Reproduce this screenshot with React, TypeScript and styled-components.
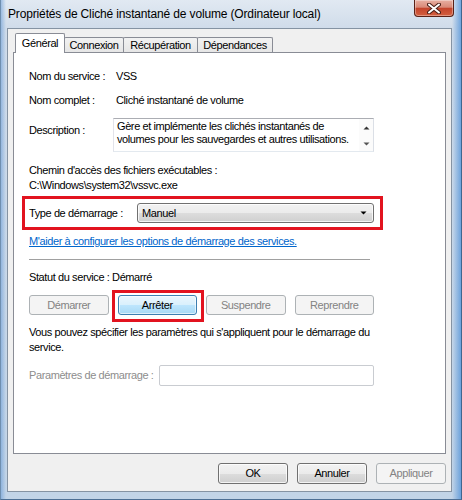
import React from 'react';
import styled, { createGlobalStyle, css } from 'styled-components';

const Global = createGlobalStyle`
  html, body { margin: 0; padding: 0; background: #ffffff; }
  body { font-family: "Liberation Sans", Arial, sans-serif; font-size: 11px; color: #000; }
  * { box-sizing: border-box; }
`;

const UI_FONT = css`
  font-family: "Liberation Sans", Arial, sans-serif;
  font-size: 11px;
  letter-spacing: -0.4px;
  line-height: 13px;
`;

const Win = styled.div`
  width: 462px;
  height: 500px;
  display: flex;
  flex-direction: column;
  background:
    linear-gradient(90deg, rgba(80, 140, 210, 0.45) 0px, rgba(255, 255, 255, 0) 5px, rgba(255, 255, 255, 0) calc(100% - 9px), rgba(70, 140, 215, 0.7) 100%),
    linear-gradient(180deg, #e1e9f2 0px, #d0dcea 28px, #c2d4e7 100%);
  border-left: 1px solid #6f8fb0;
  border-right: 1px solid #3f6790;
  border-bottom: 1px solid #4d6f94;
  overflow: hidden;
`;

const TitleBar = styled.div`
  height: 28px;
  flex: none;
  display: flex;
  align-items: flex-start;
  padding: 0 7px;
`;

const Title = styled.div`
  align-self: center;
  font-family: "Liberation Sans", Arial, sans-serif;
  font-size: 12px;
  letter-spacing: -0.15px;
  color: #000;
`;

const CloseBtn = styled.div`
  margin-left: auto;
  width: 40px;
  height: 17px;
  border: 1px solid #5a2117;
  border-top: none;
  border-radius: 0 0 4px 4px;
  background: linear-gradient(180deg, #e8b0a2 0%, #d98a78 45%, #c4452c 52%, #d4603f 100%);
  box-shadow: inset 0 0 0 1px rgba(255, 255, 255, 0.35);
  display: flex;
  align-items: center;
  justify-content: center;
`;

const Client = styled.div`
  flex: 1;
  margin: 0 9px 7px 6px;
  background: #f0f0f0;
  border: 1px solid #8593a3;
  padding: 4px 5px 7px 5px;
  display: flex;
  flex-direction: column;
`;

const TabStrip = styled.div`
  display: flex;
  align-items: flex-end;
  height: 20px;
  padding-left: 2px;
  position: relative;
  z-index: 1;
`;

const Tab = styled.div<{ $active?: boolean; $w: number }>`
  ${UI_FONT};
  width: ${(p) => p.$w}px;
  height: ${(p) => (p.$active ? 20 : 15)}px;
  margin-bottom: ${(p) => (p.$active ? 0 : 1)}px;
  margin-right: -1px;
  border: 1px solid #898c95;
  border-bottom: none;
  border-radius: 2px 2px 0 0;
  background: ${(p) => (p.$active ? '#ffffff' : 'linear-gradient(180deg, #f2f2f2 0%, #e6e6e6 100%)')};
  display: flex;
  align-items: center;
  justify-content: center;
  padding-bottom: ${(p) => (p.$active ? 1 : 0)}px;
`;

const Panel = styled.div`
  flex: 1;
  margin-top: -1px;
  background: #ffffff;
  border: 1px solid #898c95;
  padding: 0 0 0 15px;
  display: flex;
  flex-direction: column;
  align-items: flex-start;
`;

const Text = styled.div<{ $mt?: number; $muted?: boolean }>`
  ${UI_FONT};
  margin-top: ${(p) => p.$mt ?? 0}px;
  color: ${(p) => (p.$muted ? '#8d8d8d' : '#000')};
  white-space: nowrap;
`;

const InfoRow = styled.div<{ $mt: number }>`
  display: grid;
  grid-template-columns: 87px auto;
  align-items: start;
  margin-top: ${(p) => p.$mt}px;
`;

const DescLabel = styled(Text)`
  margin-top: 6px;
`;

const DescBox = styled.div`
  margin-left: -3px;
  width: 261px;
  height: 34px;
  border: 1px solid #abadb3;
  border-right-color: #dbdfe6;
  border-bottom-color: #e3e9ef;
  border-left-color: #e2e3ea;
  background: #fff;
  display: flex;
`;

const DescText = styled.div`
  ${UI_FONT};
  flex: 1;
  padding: 1px 0 0 3px;
  white-space: nowrap;
`;

const ScrollBar = styled.div`
  width: 14px;
  background: #fbfbfb;
  display: flex;
  flex-direction: column;
  justify-content: space-between;
  align-items: center;
  padding: 7px 0 5px;
`;

const HighlightWrap = styled.div<{ $mt?: number }>`
  position: relative;
  margin-top: ${(p) => p.$mt ?? 0}px;
`;

const RedFrame = styled.div<{ $t: number; $r: number; $b: number; $l: number }>`
  position: absolute;
  top: ${(p) => -p.$t}px;
  right: ${(p) => -p.$r}px;
  bottom: ${(p) => -p.$b}px;
  left: ${(p) => -p.$l}px;
  border: 3px solid #e2131f;
  pointer-events: none;
`;

const FieldRow = styled.div<{ $label: number; $mt?: number }>`
  display: grid;
  grid-template-columns: ${(p) => p.$label}px auto;
  align-items: center;
  margin-top: ${(p) => p.$mt ?? 0}px;
`;

const Combo = styled.div`
  ${UI_FONT};
  width: 237px;
  height: 20px;
  border: 1px solid #707070;
  border-radius: 3px;
  background: linear-gradient(180deg, #f2f2f2 0%, #ebebeb 50%, #dddddd 50%, #cfcfcf 100%);
  box-shadow: inset 0 0 0 1px rgba(255, 255, 255, 0.75);
  display: flex;
  align-items: center;
  padding: 0 6px 0 4px;
  justify-content: space-between;
`;

const Link = styled.a`
  ${UI_FONT};
  display: block;
  margin-top: 12px;
  color: #0066cc;
  text-decoration: underline;
  white-space: nowrap;
`;

const Separator = styled.div`
  margin-top: 11px;
  width: 341px;
  height: 1px;
  background: #a0a0a0;
`;

const ServiceButtons = styled.div`
  display: grid;
  grid-template-columns: repeat(4, 1fr);
  column-gap: 9px;
  width: 345px;
  margin-top: 11px;
`;

type BtnState = 'normal' | 'disabled' | 'hot';

const PushButton = styled.div<{ $state?: BtnState; $h?: number; $w?: number }>`
  ${UI_FONT};
  height: ${(p) => p.$h ?? 20}px;
  width: ${(p) => (p.$w ? `${p.$w}px` : 'auto')};
  border-radius: 3px;
  display: flex;
  align-items: center;
  justify-content: center;
  ${(p) =>
    p.$state === 'disabled'
      ? css`
          border: 1px solid #adb2b5;
          background: #f4f4f4;
          color: #838383;
        `
      : p.$state === 'hot'
      ? css`
          border: 1px solid #3c7fb1;
          background: linear-gradient(180deg, #eaf6fd 0%, #d9f0fc 50%, #bee6fd 50%, #a7d9f5 100%);
          box-shadow: inset 0 0 0 1px rgba(255, 255, 255, 0.6);
          color: #000;
        `
      : css`
          border: 1px solid #707070;
          background: linear-gradient(180deg, #f2f2f2 0%, #ebebeb 50%, #dddddd 50%, #cfcfcf 100%);
          box-shadow: inset 0 0 0 1px rgba(255, 255, 255, 0.75);
          color: #000;
        `}
`;

const Paragraph = styled.div`
  ${UI_FONT};
  line-height: 15px;
  margin-top: 10px;
  white-space: nowrap;
`;

const TextInput = styled.div`
  width: 215px;
  height: 21px;
  border: 1px solid #c9ccd1;
  border-radius: 2px;
  background: #fff;
`;

const Footer = styled.div`
  display: flex;
  justify-content: flex-end;
  gap: 9px;
  margin-top: 9px;
`;

const UpArrow = () => (
  <svg width="7" height="4" viewBox="0 0 7 4">
    <path d="M0.5 3.5 L3.5 0.5 L6.5 3.5 Z" fill="#333" />
  </svg>
);
const DownArrow = ({ color = '#333' }: { color?: string }) => (
  <svg width="7" height="4" viewBox="0 0 7 4">
    <path d="M0.5 0.5 L6.5 0.5 L3.5 3.5 Z" fill={color} />
  </svg>
);

export default function App() {
  return (
    <>
      <Global />
      <Win>
        <TitleBar>
          <Title>Propriétés de Cliché instantané de volume (Ordinateur local)</Title>
          <CloseBtn>
            <svg width="14" height="11" viewBox="0 0 14 11">
              <path d="M2 1.5 L12 9.5 M12 1.5 L2 9.5" stroke="#4a2018" strokeWidth="4" strokeLinecap="round" />
              <path d="M2 1.5 L12 9.5 M12 1.5 L2 9.5" stroke="#ffffff" strokeWidth="2" strokeLinecap="round" />
            </svg>
          </CloseBtn>
        </TitleBar>
        <Client>
          <TabStrip>
            <Tab $active $w={50}>Général</Tab>
            <Tab $w={60}>Connexion</Tab>
            <Tab $w={75}>Récupération</Tab>
            <Tab $w={76}>Dépendances</Tab>
          </TabStrip>
          <Panel>
            <InfoRow $mt={17}>
              <Text>Nom du service :</Text>
              <Text>VSS</Text>
            </InfoRow>
            <InfoRow $mt={11}>
              <Text>Nom complet :</Text>
              <Text>Cliché instantané de volume</Text>
            </InfoRow>
            <InfoRow $mt={11}>
              <DescLabel>Description :</DescLabel>
              <DescBox>
                <DescText>
                  Gère et implémente les clichés instantanés de
                  <br />
                  volumes pour les sauvegardes et autres utilisations.
                </DescText>
                <ScrollBar>
                  <UpArrow />
                  <DownArrow color="#555" />
                </ScrollBar>
              </DescBox>
            </InfoRow>
            <Text $mt={12}>Chemin d'accès des fichiers exécutables :</Text>
            <Text $mt={2}>C:\Windows\system32\vssvc.exe</Text>
            <HighlightWrap $mt={11}>
              <FieldRow $label={108}>
                <Text>Type de démarrage :</Text>
                <Combo>
                  <span>Manuel</span>
                  <DownArrow color="#000" />
                </Combo>
              </FieldRow>
              <RedFrame $t={7} $r={9} $b={7} $l={7} />
            </HighlightWrap>
            <Link>M'aider à configurer les options de démarrage des services.</Link>
            <Separator />
            <Text $mt={11}>Statut du service : Démarré</Text>
            <ServiceButtons>
              <PushButton $state="disabled">Démarrer</PushButton>
              <HighlightWrap>
                <PushButton $state="hot">Arrêter</PushButton>
                <RedFrame $t={5} $r={7} $b={7} $l={6} />
              </HighlightWrap>
              <PushButton $state="disabled">Suspendre</PushButton>
              <PushButton $state="disabled">Reprendre</PushButton>
            </ServiceButtons>
            <Paragraph>
              Vous pouvez spécifier les paramètres qui s'appliquent pour le démarrage du
              <br />
              service.
            </Paragraph>
            <FieldRow $label={130} $mt={10}>
              <Text $muted>Paramètres de démarrage :</Text>
              <TextInput />
            </FieldRow>
          </Panel>
          <Footer>
            <PushButton $w={70} $h={21}>OK</PushButton>
            <PushButton $w={70} $h={21}>Annuler</PushButton>
            <PushButton $w={70} $h={21} $state="disabled">Appliquer</PushButton>
          </Footer>
        </Client>
      </Win>
    </>
  );
}
